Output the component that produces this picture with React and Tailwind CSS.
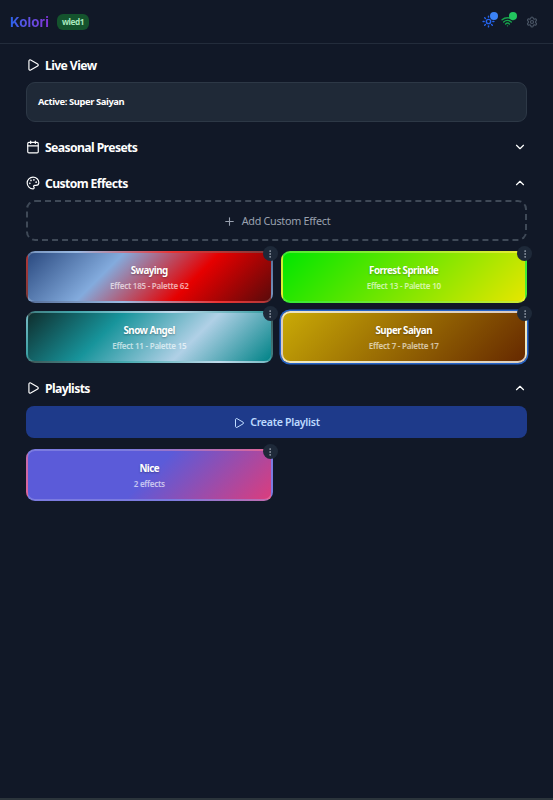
import { Calendar, ChevronDown, ChevronUp, EllipsisVertical, Palette, Play, Plus, Settings, Sun, Wifi } from 'lucide-react';

const effects = [
  {
    name: 'Swaying',
    detail: 'Effect 185 - Palette 62',
    look: 'border-white/20 bg-[linear-gradient(135deg,#2b4a80_0%,#83abdd_33%,#e60000_66%,#5a0a0a_100%)]',
  },
  {
    name: 'Forrest Sprinkle',
    detail: 'Effect 13 - Palette 10',
    look: 'border-white/20 bg-[linear-gradient(135deg,#00e600_0%,#e6e600_100%)]',
  },
  {
    name: 'Snow Angel',
    detail: 'Effect 11 - Palette 15',
    look: 'border-white/20 bg-[linear-gradient(135deg,#0f2e2e_0%,#17949b_33%,#b0d0e6_66%,#008387_100%)]',
  },
  {
    name: 'Super Saiyan',
    detail: 'Effect 7 - Palette 17',
    look: 'border-white/75 ring-[1.5px] ring-[#2563c9] bg-[linear-gradient(135deg,#c9aa06_0%,#662900_100%)]',
  },
];

function SectionHeader({ icon: Icon, title, chevron: Chevron, className }) {
  return (
    <div className={`flex items-center justify-between ${className}`}>
      <div className="flex items-center gap-[5px]">
        <Icon className="h-[14px] w-[14px]" />
        <h2 className="pt-px text-[12.2px] leading-[17px] font-bold tracking-[-0.6px]">{title}</h2>
      </div>
      {Chevron && <Chevron className="h-[14px] w-[14px]" />}
    </div>
  );
}

function EffectCard({ name, detail, look }) {
  return (
    <div className={`relative flex h-[52px] flex-col items-center rounded-[9px] border-2 pt-[10px] ${look}`}>
      <p className="text-[9.8px] leading-[15px] font-bold tracking-[-0.52px] text-white [text-shadow:0_1px_2px_rgba(0,0,0,0.3)]">{name}</p>
      <p className="mt-[2px] text-[8px] leading-[12px] font-semibold tracking-[-0.23px] text-white/65">{detail}</p>
      {/* Menu */}
      <button className="absolute -top-[7px] -right-[7px] flex h-[15px] w-[15px] items-center justify-center rounded-full bg-gray-800 text-gray-400">
        <EllipsisVertical className="h-[10px] w-[10px]" />
      </button>
    </div>
  );
}

export default function App() {
  return (
    <div className="min-h-screen border-b-2 border-[#2b343b] bg-[#111827] font-['Noto_Sans',sans-serif] text-white">
      {/* Top bar */}
      <header className="flex h-[44px] items-center justify-between border-b border-[#232c3b] pr-[15px] pl-[10px]">
        <div className="flex items-center gap-[8px]">
          <h1 className="bg-gradient-to-r from-[#2563eb] to-[#8132d8] bg-clip-text pt-px font-['Inter',sans-serif] text-[13.4px] leading-[20px] font-bold tracking-[0.1px] text-transparent">
            Kolori
          </h1>
          <span className="flex h-[16px] items-center rounded-[6px] bg-[#14532d] px-[5px] pt-px text-[8.2px] font-bold tracking-[-0.4px] text-[#a7e8be]">wled1</span>
        </div>
        <div className="flex items-center">
          <div className="relative mr-[6px]">
            <Sun strokeWidth={2.6} className="h-[13px] w-[13px] text-[#2563eb]" />
            <span className="absolute -top-[3px] -right-[3px] h-[8px] w-[8px] rounded-full bg-[#3b82f6]" />
          </div>
          <div className="relative mr-[12px]">
            <Wifi strokeWidth={2.6} className="h-[13px] w-[13px] text-[#16a34a]" />
            <span className="absolute -top-[3px] -right-[3px] h-[8px] w-[8px] rounded-full bg-[#22c55e]" />
          </div>
          <Settings strokeWidth={2.4} className="h-[12px] w-[12px] text-gray-600" />
        </div>
      </header>

      <main className="px-[26px] pt-[12px]">
        <SectionHeader icon={Play} title="Live View" />
        <div className="mt-[8px] flex h-[40px] items-center rounded-[9px] border border-[#2d3846] bg-[#1f2937] px-[11px]">
          <p className="text-[9.4px] font-bold tracking-[-0.4px]">Active: Super Saiyan</p>
        </div>

        <SectionHeader icon={Calendar} title="Seasonal Presets" chevron={ChevronDown} className="mt-[16px]" />

        <SectionHeader icon={Palette} title="Custom Effects" chevron={ChevronUp} className="mt-[18px]" />
        <button className="mt-[8px] flex h-[41px] w-full items-center justify-center gap-[6px] rounded-[9px] border-2 border-dashed border-[#3f4957] pt-px text-[10.8px] tracking-[-0.3px] text-gray-400">
          <Plus className="h-[13px] w-[13px]" />
          Add Custom Effect
        </button>
        <div className="mt-[10px] grid grid-cols-2 gap-[8px]">
          {effects.map((effect) => (
            <EffectCard key={effect.name} {...effect} />
          ))}
        </div>

        <SectionHeader icon={Play} title="Playlists" chevron={ChevronUp} className="mt-[16px]" />
        <button className="mt-[9px] flex h-[32px] w-full items-center justify-center gap-[5px] rounded-[8px] bg-[#1e3a8a] pt-px text-[10.6px] font-semibold tracking-[-0.3px] text-blue-200">
          <Play className="h-[12px] w-[12px]" />
          Create Playlist
        </button>
        <div className="mt-[11px] grid grid-cols-2 gap-[8px]">
          <EffectCard
            name="Nice"
            detail="2 effects"
            look="border-white/20 bg-[linear-gradient(135deg,#5b5bd9_0%,#5b5bd9_50%,#db3d7d_100%)]"
          />
        </div>
      </main>
    </div>
  );
}
